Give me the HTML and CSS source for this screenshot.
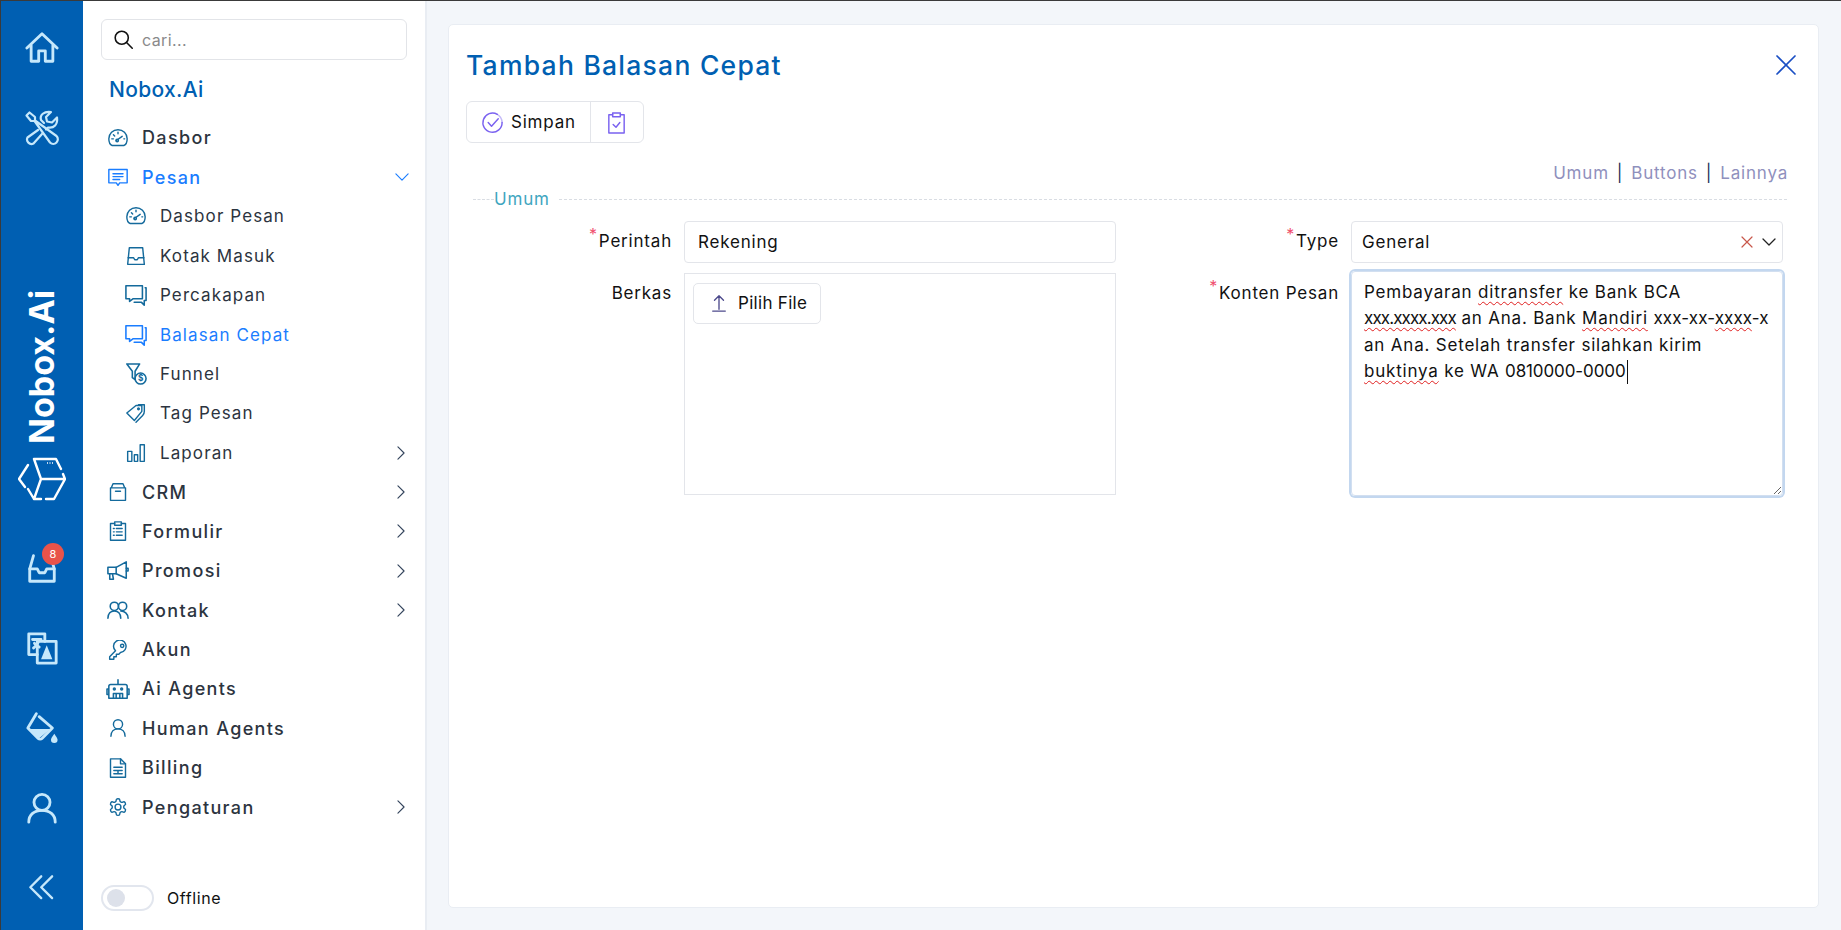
FILE: index.html
```html
<!DOCTYPE html>
<html lang="id">
<head>
  <meta charset="UTF-8" />
  <meta name="viewport" content="width=device-width, initial-scale=1.0" />
  <title>Tambah Balasan Cepat - Nobox.Ai</title>
  <link rel="stylesheet" href="styles.css">
</head>
<body>
<div class="app">

  <!-- rail kiri -->
  <nav class="rail">
    <div class="rail-slot">
      <svg class="rail-icon" viewBox="0 0 36 36"><path d="M2 18 18 3l16 15M6.5 15v17h8V21h7v11h8V15"/></svg>
    </div>
    <div class="rail-slot">
      <svg class="rail-icon rail-tools" viewBox="0 0 36 36"><path d="M2.5 5.500 5.500 2.500 11 7v3.500L32.500 26a4.500 4.500 0 0 1-6.500 6.500L10.500 11H7z"/><path d="M14 20 3.500 27.500a4.500 4.500 0 0 0 6 6L18 24"/><path d="M20 13 17 10c-1.500-5 3-9 10-8l-5 5 1 4.500 5 1 5-5c1 7-3 11-9 10l-2 2"/></svg>
    </div>

    <div class="brand">Nobox.Ai</div>
    <svg class="brand-cube" viewBox="0 0 48 46"><path d="M16 3h22l5 10M45 18l2 5-11 20h-8M23 43h-7L10 33M7 31l-6-8 9-14M23 23 16 3M23 23h24M23 23l-7 20"/><path class="cube-dots" d="M29 7h7"/></svg>

    <div class="rail-slot rail-slot-first">
      <svg class="rail-icon" viewBox="0 0 36 36"><path d="M9 5 5 19v13h26V19L27 5"/><path d="M5 19h8l2 4h6l2-4h8"/></svg>
      <span class="badge">8</span>
    </div>
    <div class="rail-slot">
      <svg class="rail-icon" viewBox="0 0 36 36"><path d="M21 11V3H4v22h9"/><path d="M13 34V11h20v23z"/><path d="M8 9h9M15 9c-1 4-3 7-6 9M10 13c1 2 3 3 5 4"/><path class="fill-solid" d="m23 15-6 15h12z"/></svg>
    </div>
    <div class="rail-slot">
      <svg class="rail-icon" viewBox="0 0 36 36"><path d="M12 3 3 18l11 11c1 1 3 1 4 0l11-11L15 6"/><path class="fill-solid" d="M5 19h22L16 28c-1 1-2 1-3 0z"/><path class="fill-solid" d="M31 24c2 3 3.500 5 3.500 6.500a3.500 3.500 0 0 1-7 0C27.500 29 29 27 31 24z"/></svg>
    </div>
    <div class="rail-slot">
      <svg class="rail-icon" viewBox="0 0 36 36"><circle cx="18" cy="12" r="8.500"/><path d="M4 33c0-8 6-12.500 14-12.500S32 25 32 33"/></svg>
    </div>
    <div class="rail-slot">
      <svg class="rail-icon rail-collapse" viewBox="0 0 36 36"><path d="M17 3 3 17l14 14M31 3 17 17l14 14"/></svg>
    </div>
  </nav>

  <!-- menu -->
  <aside class="sidebar">
    <div class="search">
      <svg class="search-icon" viewBox="0 0 24 24"><circle cx="10" cy="10" r="7.500"/><path d="m15.500 15.500 6.500 6.500"/></svg>
      <span>cari...</span>
    </div>
    <div class="logo-text">Nobox.Ai</div>

    <ul class="menu">
      <li class="menu-item">
        <svg class="mi" viewBox="0 0 24 24"><path d="M5 21h14c3-1 4-4 4-8a11 11 0 0 0-22 0c0 4 1 7 4 8z"/><path d="m10 15 7-5M4.500 13h2M6.500 8l1.500 1.500M12 5v2M19 13h1"/><circle cx="11" cy="15" r="1.500"/></svg>
        <span>Dasbor</span>
      </li>
      <li class="menu-item active">
        <svg class="mi" viewBox="0 0 24 24"><path d="M1 3h22v16h-9l-2 3-2-3H1z"/><path d="M6 8h12M6 11.500h12M6 15h8"/></svg>
        <span>Pesan</span>
        <svg class="arrow arrow-open" viewBox="0 0 16 16"><path d="m1 4.500 7 7 7-7"/></svg>
      </li>
      <li class="menu-item sub">
        <svg class="mi" viewBox="0 0 24 24"><path d="M5 21h14c3-1 4-4 4-8a11 11 0 0 0-22 0c0 4 1 7 4 8z"/><path d="m10 15 7-5M4.500 13h2M6.500 8l1.500 1.500M12 5v2M19 13h1"/><circle cx="11" cy="15" r="1.500"/></svg>
        <span>Dasbor Pesan</span>
      </li>
      <li class="menu-item sub">
        <svg class="mi" viewBox="0 0 24 24"><path d="M4 2h16l2 20H2z"/><path d="M2.500 14H9l1.500 2.500h3L15 14h6.500"/></svg>
        <span>Kotak Masuk</span>
      </li>
      <li class="menu-item sub">
        <svg class="mi mi-wide" viewBox="0 0 24 24"><path d="M19 2H1v14h4v3l4-3h10z"/><path d="M10 20h8l3 3v-5h2V4h-1"/></svg>
        <span>Percakapan</span>
      </li>
      <li class="menu-item sub active">
        <svg class="mi mi-wide" viewBox="0 0 24 24"><path d="M19 2H1v14h4v3l4-3h10z"/><path d="M10 20h8l3 3v-5h2V4h-1"/></svg>
        <span>Balasan Cepat</span>
      </li>
      <li class="menu-item sub">
        <svg class="mi mi-wide" viewBox="0 0 24 24"><path d="M2 1h14l-5 8v9l-3-2V9z"/><circle cx="17" cy="17" r="6"/><text class="mi-dollar" x="17" y="20">$</text></svg>
        <span>Funnel</span>
      </li>
      <li class="menu-item sub">
        <svg class="mi" viewBox="0 0 24 24"><path d="M10 21 1 12 12 3h7v7z"/><path d="M15 2h7v8c0 2-1 4-2 5l-8 8"/><circle cx="15" cy="7" r="1"/></svg>
        <span>Tag Pesan</span>
      </li>
      <li class="menu-item sub">
        <svg class="mi" viewBox="0 0 24 24"><path d="M2 10h5v12H2zM10 14h4v8h-4zM17 2h5v20h-5z"/></svg>
        <span>Laporan</span>
        <svg class="arrow" viewBox="0 0 16 16"><path d="m4.500 1 7 7-7 7"/></svg>
      </li>
      <li class="menu-item">
        <svg class="mi" viewBox="0 0 24 24"><path d="M4 7 6 2h12l2 5M3 7h18v15H3z"/><path d="M9 11h6"/></svg>
        <span>CRM</span>
        <svg class="arrow" viewBox="0 0 16 16"><path d="m4.500 1 7 7-7 7"/></svg>
      </li>
      <li class="menu-item">
        <svg class="mi" viewBox="0 0 24 24"><path d="M8 3H3v20h18V3h-5"/><path d="M8 1h8v4H8zM10 9h7M10 13h7M10 17h7M6.500 9h1M6.500 13h1M6.500 17h1"/></svg>
        <span>Formulir</span>
        <svg class="arrow" viewBox="0 0 16 16"><path d="m4.500 1 7 7-7 7"/></svg>
      </li>
      <li class="menu-item">
        <svg class="mi mi-wide" viewBox="0 0 24 24"><path d="M1 8h9l11-6v18L10 15H1z"/><path d="M3 15v6h4l-1-6M10 8v7M21 9h2v3h-2"/></svg>
        <span>Promosi</span>
        <svg class="arrow" viewBox="0 0 16 16"><path d="m4.500 1 7 7-7 7"/></svg>
      </li>
      <li class="menu-item">
        <svg class="mi mi-wide" viewBox="0 0 24 24"><circle cx="8" cy="8" r="4.500"/><circle cx="17" cy="8" r="4.500"/><path d="M1 21c0-5 3-8 7-8s7 3 7 8M15 13c4 0 8 3 8 8"/></svg>
        <span>Kontak</span>
        <svg class="arrow" viewBox="0 0 16 16"><path d="m4.500 1 7 7-7 7"/></svg>
      </li>
      <li class="menu-item">
        <svg class="mi" viewBox="0 0 24 24"><path d="M9 13 2 20v3h5v-3h3v-3h3l2-2a7.500 7.500 0 1 0-6-2z"/><circle cx="17" cy="7" r="2"/></svg>
        <span>Akun</span>
      </li>
      <li class="menu-item">
        <svg class="mi mi-wide" viewBox="0 0 24 24"><path d="M4 7h16a2 2 0 0 1 2 2v13H2V9a2 2 0 0 1 2-2zM12 7V2M2 12H0v6h2M22 12h2v6h-2"/><path d="M7 22v-5h10v5M10 17v5M14 17v5"/><circle cx="8" cy="12" r="1"/><circle cx="16" cy="12" r="1"/></svg>
        <span>Ai Agents</span>
      </li>
      <li class="menu-item">
        <svg class="mi" viewBox="0 0 24 24"><circle cx="12" cy="7.500" r="5.500"/><path d="M3.500 22c0-5.500 3.500-9 8.500-9s8.500 3.500 8.500 9"/></svg>
        <span>Human Agents</span>
      </li>
      <li class="menu-item">
        <svg class="mi" viewBox="0 0 24 24"><path d="M3 1h12l6 6v16H3z"/><path d="M15 1v6h6M7 11h10M7 15h10M7 19h10M12 15v4"/></svg>
        <span>Billing</span>
      </li>
      <li class="menu-item">
        <svg class="mi" viewBox="0 0 24 24"><path d="M12.220 2h-.440a2 2 0 0 0-2 2v.180a2 2 0 0 1-1 1.730l-.430.250a2 2 0 0 1-2 0l-.150-.080a2 2 0 0 0-2.730.730l-.220.380a2 2 0 0 0 .730 2.730l.150.100a2 2 0 0 1 1 1.720v.510a2 2 0 0 1-1 1.740l-.150.090a2 2 0 0 0-.730 2.730l.220.380a2 2 0 0 0 2.730.730l.150-.080a2 2 0 0 1 2 0l.430.250a2 2 0 0 1 1 1.730V20a2 2 0 0 0 2 2h.440a2 2 0 0 0 2-2v-.180a2 2 0 0 1 1-1.730l.430-.250a2 2 0 0 1 2 0l.150.080a2 2 0 0 0 2.730-.730l.220-.390a2 2 0 0 0-.730-2.730l-.150-.080a2 2 0 0 1-1-1.740v-.500a2 2 0 0 1 1-1.740l.150-.090a2 2 0 0 0 .730-2.730l-.220-.380a2 2 0 0 0-2.730-.730l-.150.080a2 2 0 0 1-2 0l-.430-.250a2 2 0 0 1-1-1.730V4a2 2 0 0 0-2-2z"/><circle cx="12" cy="12" r="3.500"/></svg>
        <span>Pengaturan</span>
        <svg class="arrow" viewBox="0 0 16 16"><path d="m4.500 1 7 7-7 7"/></svg>
      </li>
    </ul>

    <div class="status">
      <span class="switch"><span class="switch-dot"></span></span>
      <span>Offline</span>
    </div>
  </aside>

  <!-- konten -->
  <main class="content">
    <section class="card">
      <header class="card-head">
        <h1>Tambah Balasan Cepat</h1>
        <svg class="close" viewBox="0 0 20 20"><path d="M1 1l18 18M19 1 1 19"/></svg>
      </header>

      <div class="btn-group">
        <button class="btn" type="button">
          <svg class="btn-icon" viewBox="0 0 24 24"><path d="M17 3.500A10 10 0 1 0 22 12"/><path d="M17 3.500A10 10 0 0 1 22 12" opacity=".45"/><path d="m7.500 12 3.500 4 7-8"/></svg>
          Simpan
        </button>
        <button class="btn btn-icon-only" type="button">
          <svg class="btn-icon" viewBox="0 0 24 24"><path d="M8 4H4v19h16V4h-4"/><path d="M8 2h8v4H8z"/><path d="m8.500 14 3 3 4-5"/></svg>
        </button>
      </div>

      <div class="anchors">
        <a>Umum</a><i>|</i><a>Buttons</a><i>|</i><a>Lainnya</a>
      </div>

      <div class="divider"><span>Umum</span></div>

      <div class="form-grid">
        <div class="form-col">
          <label class="field-label required">Perintah</label>
          <div class="input">Rekening</div>
          <label class="field-label field-label-2">Berkas</label>
          <div class="upload">
            <button class="btn-upload" type="button">
              <svg class="upload-icon" viewBox="0 0 20 20"><path d="M10 17V2M5 7l5-5 5 5M3 19h14"/></svg>
              Pilih File
            </button>
          </div>
        </div>

        <div class="form-col">
          <label class="field-label required">Type</label>
          <div class="input select">
            <span>General</span>
            <svg class="select-clear" viewBox="0 0 12 12"><path d="m1 1 10 10M11 1 1 11"/></svg>
            <svg class="select-arrow" viewBox="0 0 14 14"><path d="m1 4 6 6 6-6"/></svg>
          </div>
          <label class="field-label field-label-2 required">Konten Pesan</label>
          <div class="textarea">Pembayaran <span class="typo">ditransfer</span> ke Bank BCA<br><span class="typo tight">xxx.xxxx.xxx</span> an Ana. Bank <span class="typo">Mandiri</span> <span class="semi-tight">xxx-xx-<span class="typo">xxxx</span>-x</span><br>an Ana. Setelah transfer silahkan kirim<br><span class="typo">buktinya</span> ke WA <span class="digits">0810000-0000</span><span class="caret"></span></div>
        </div>
      </div>
    </section>
  </main>

</div>
</body>
</html>
```

FILE: styles.css
```css
* {
  box-sizing: border-box;
}

html, body {
  height: 100%;
}

body {
  margin: 0;
  overflow: hidden;
  font-family: Inter, "Noto Sans", sans-serif;
  font-size: 17px;
  letter-spacing: .8px;
  color: #111;
  background: #f3f6fa;
}

svg {
  flex: none;
  fill: none;
  stroke: currentColor;
  stroke-linecap: round;
  stroke-linejoin: round;
}

.app {
  display: flex;
  height: 930px;
  border-top: 1px solid #3a3a3a;
  border-left: 1px solid #3a3a3a;
}

/* rail kiri */
.rail {
  flex: none;
  width: 82px;
  display: flex;
  flex-direction: column;
  align-items: center;
  padding-top: 7px;
  background: #005fb2;
  color: #c6e8fb;
}

.rail-slot {
  position: relative;
  width: 100%;
  height: 80px;
  display: flex;
  align-items: center;
  justify-content: center;
}

.rail-slot-first {
  margin-top: 26px;
}

.rail-icon {
  width: 34px;
  height: 34px;
  stroke-width: 3;
}

.rail-tools {
  width: 36px;
  height: 36px;
  stroke-width: 2.2;
}

.rail-collapse {
  width: 28px;
  height: 28px;
  stroke-width: 3;
}

.fill-solid {
  fill: #c6e8fb;
  stroke: none;
}

.brand {
  margin-top: 122px;
  height: 154px;
  writing-mode: vertical-rl;
  transform: rotate(180deg);
  font-size: 34px;
  line-height: 1;
  font-weight: 700;
  letter-spacing: 0;
  color: #fff;
  text-align: center;
  white-space: nowrap;
}

.brand-cube {
  width: 48px;
  height: 46px;
  margin-top: 12px;
  color: #fff;
  stroke-width: 2.4;
}

.cube-dots {
  stroke-dasharray: 1 1.5;
  stroke-linecap: butt;
  stroke-width: 1.5;
}

.badge {
  position: absolute;
  top: 15px;
  left: 41px;
  width: 22px;
  height: 22px;
  border-radius: 50%;
  background: #e8534a;
  color: #fff;
  font-size: 11px;
  letter-spacing: 0;
  line-height: 22px;
  text-align: center;
}

/* menu */
.sidebar {
  flex: none;
  width: 344px;
  display: flex;
  flex-direction: column;
  padding: 18px 18px 0;
  background: #fff;
  border-right: 2px solid #e9edf3;
}

.search {
  display: flex;
  align-items: center;
  gap: 8px;
  height: 41px;
  padding: 0 11px;
  border: 1px solid #e2e4e8;
  border-radius: 6px;
  color: #8a8a8a;
  font-size: 16px;
  letter-spacing: .4px;
}

.search-icon {
  width: 21px;
  height: 21px;
  color: #111;
  stroke-width: 1.8;
}

.logo-text {
  margin: 11px 0 0 8px;
  height: 38px;
  font-size: 21px;
  line-height: 38px;
  font-weight: 500;
  color: #005fb2;
  letter-spacing: .3px;
}

.menu {
  list-style: none;
  margin: 9px 0 0;
  padding: 0;
}

.menu-item {
  display: flex;
  align-items: center;
  height: 39.38px;
  padding-left: 7px;
  font-size: 18px;
  font-weight: 500;
  letter-spacing: 1.35px;
  color: #2c3440;
}

.menu-item .mi {
  width: 20px;
  height: 20px;
  margin-right: 14px;
  color: #146a9c;
  stroke-width: 1.7;
}

.menu-item .mi-wide {
  width: 26px;
  height: 22px;
  margin-left: -3px;
  margin-right: 11px;
}

.mi-dollar {
  fill: currentColor;
  stroke: none;
  font-size: 9px;
  font-weight: 700;
  letter-spacing: 0;
  text-anchor: middle;
}

.menu-item.sub {
  padding-left: 25px;
  font-size: 17px;
  font-weight: 400;
  letter-spacing: 1.1px;
}

.menu-item.active,
.menu-item.active .mi {
  color: #1a7dff;
}

.arrow {
  width: 14px;
  height: 14px;
  margin-left: auto;
  margin-right: -1px;
  color: #33445c;
  stroke-width: 1.3;
}

.arrow-open {
  color: #1a7dff;
  margin-right: -2px;
}

.status {
  display: flex;
  align-items: center;
  gap: 13px;
  margin-top: auto;
  margin-bottom: 19px;
  font-size: 16px;
  letter-spacing: .6px;
}

.switch {
  width: 53px;
  height: 26px;
  padding: 3px 4px;
  border: 2px solid #e2e6ee;
  border-radius: 13px;
}

.switch-dot {
  display: block;
  width: 18px;
  height: 18px;
  margin-top: -1px;
  border-radius: 50%;
  background: #dde1ea;
}

/* konten */
.content {
  flex: 1;
  padding: 23px 22px 22px 21px;
}

.card {
  height: 100%;
  padding: 0 18px 0 17px;
  background: #fff;
  border: 1px solid #e9edf3;
  border-radius: 5px;
}

.card-head {
  display: flex;
  align-items: center;
  justify-content: space-between;
  height: 76px;
  padding-top: 3px;
}

h1 {
  margin: 0;
  font-size: 26.5px;
  font-weight: 500;
  color: #005fb2;
  letter-spacing: 1.25px;
}

.close {
  width: 20px;
  height: 20px;
  margin-right: 4px;
  color: #1a4fc4;
  stroke-width: 1.7;
}

.btn-group {
  display: inline-flex;
  height: 42px;
  border: 1px solid #e3e5ea;
  border-radius: 6px;
}

.btn {
  display: flex;
  align-items: center;
  gap: 7px;
  width: 123px;
  padding: 0 14px;
  border: 0;
  background: none;
  font: inherit;
  letter-spacing: inherit;
  color: #111;
}

.btn-icon-only {
  width: 53px;
  padding: 0 14px;
  border-left: 1px solid #e3e5ea;
}

.btn-icon {
  width: 23px;
  height: 23px;
  color: #7a62f0;
  stroke-width: 1.5;
}

.anchors {
  display: flex;
  justify-content: flex-end;
  align-items: center;
  gap: 8px;
  height: 24px;
  margin: 18px 12px 0 0;
  color: #8f90bd;
}

.anchors i {
  font-style: normal;
  color: #26335c;
}

.divider {
  display: flex;
  align-items: center;
  margin: 2px 13px 0 7px;
  height: 24px;
  color: #3fa6bf;
}

.divider::before,
.divider::after {
  content: "";
  border-top: 1px dashed #d9dde3;
}

.divider::before {
  flex: none;
  width: 21px;
}

.divider::after {
  flex: 1;
}

.divider span {
  padding-right: 9px;
}

.form-grid {
  display: grid;
  grid-template-columns: 432px 432px;
  column-gap: 235px;
  margin: 10px 0 0 218px;
}

.form-col {
  display: grid;
  grid-template-columns: 432px;
  row-gap: 8px;
  position: relative;
}

.field-label {
  position: absolute;
  right: calc(100% + 12px);
  padding-top: 10px;
  white-space: nowrap;
}

.field-label-2 {
  top: 51px;
  padding-top: 11px;
}

.required::before {
  content: "*";
  position: relative;
  top: -7px;
  margin-right: 1px;
  color: #f0506e;
  font-size: 16px;
}

.input {
  display: flex;
  align-items: center;
  height: 42px;
  padding: 0 13px;
  border: 1px solid #e3e5ea;
  border-radius: 4px;
}

.select {
  padding: 0 4px 0 10px;
}

.select span {
  flex: 1;
}

.select-clear {
  width: 12px;
  height: 12px;
  margin-right: 9px;
  color: #c8574a;
  stroke-width: 1.2;
}

.select-arrow {
  width: 14px;
  height: 14px;
  margin-right: 2px;
  color: #222;
  stroke-width: 1.3;
}

.upload {
  height: 222px;
  padding: 9px 8px;
  border: 1px solid #e3e5ea;
}

.btn-upload {
  display: flex;
  align-items: center;
  gap: 10px;
  height: 41px;
  padding: 0 13px 0 16px;
  border: 1px solid #e3e5ea;
  border-radius: 5px;
  background: #fff;
  font: inherit;
  letter-spacing: .3px;
  color: #111;
}

.upload-icon {
  width: 18px;
  height: 20px;
  color: #4d4a8c;
  stroke-width: 1.5;
}

.textarea {
  height: 225px;
  padding: 7px 12px;
  overflow: hidden;
  resize: vertical;
  border: 1px solid #d2dff0;
  border-radius: 4px;
  box-shadow: 0 0 0 2px #c3d7ef;
  line-height: 26.3px;
  white-space: nowrap;
}

.typo {
  text-decoration: underline wavy #e02020 1px;
  text-decoration-skip-ink: none;
  text-underline-offset: 3px;
}

.tight {
  letter-spacing: -.9px;
}

.semi-tight {
  letter-spacing: .1px;
}

.digits {
  letter-spacing: -.1px;
}

.caret {
  display: inline-block;
  width: 1px;
  height: 24px;
  margin-left: 1px;
  vertical-align: middle;
  background: #111;
}
```
